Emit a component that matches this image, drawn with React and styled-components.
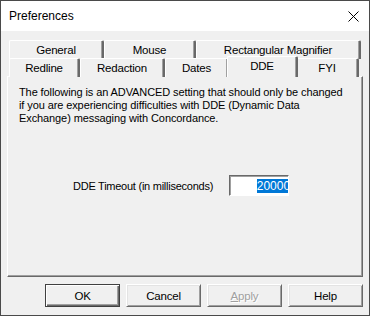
import React from 'react'
import styled, { createGlobalStyle } from 'styled-components'

const Global = createGlobalStyle`
  html, body { margin: 0; padding: 0; background: #f0f0f0; }
  * { box-sizing: border-box; }
`;

const Window = styled.div`
  width: 370px;
  height: 316px;
  border: 1px solid #4a4a4a;
  background: #f0f0f0;
  display: flex;
  flex-direction: column;
  font-family: "Liberation Sans", Arial, sans-serif;
  font-size: 11px;
  color: #000;
  overflow: hidden;
`;

const TitleBar = styled.div`
  height: 30px;
  background: #fff;
  display: flex;
  align-items: center;
  justify-content: space-between;
  padding: 0 10px 0 8px;
  font-size: 12px;
`;

const Body = styled.div`
  flex: 1;
  padding: 9px 6px 0 6px;
  display: flex;
  flex-direction: column;
`;

const Tabs = styled.div`
  display: flex;
  flex-direction: column;
  padding: 0 2px;
`;

const TabRow = styled.div`
  display: flex;
  height: 18px;
  position: relative;
  z-index: ${p => p.$front ? 2 : 1};
`;

const Tab = styled.div`
  width: ${p => p.$w}px;
  height: ${p => p.$active ? 21 : 19}px;
  margin-top: ${p => p.$active ? -2 : 0}px;
  margin-left: ${p => p.$active ? -2 : 0}px;
  margin-right: ${p => p.$active ? -2 : 0}px;
  position: relative;
  z-index: ${p => p.$active ? 3 : 1};
  background: #f0f0f0;
  border-top: 1px solid #fff;
  border-left: 1px solid #fff;
  border-right: 2px solid #696969;
  box-shadow: inset -1px 0 0 #a0a0a0;
  border-top-left-radius: 2px;
  border-top-right-radius: 2px;
  display: flex;
  align-items: center;
  justify-content: center;
  padding-bottom: ${p => p.$active ? 3 : 1}px;
  white-space: nowrap;
  font-size: 11.5px;
  letter-spacing: -0.2px;
`;

const Panel = styled.div`
  height: 201px;
  position: relative;
  z-index: 1;
  border-top: 1px solid #fff;
  border-left: 1px solid #fff;
  border-right: 1px solid #696969;
  border-bottom: 1px solid #696969;
  box-shadow: inset -1px -1px 0 #a0a0a0;
  padding: 9px 8px 0 11px;
  display: flex;
  flex-direction: column;
`;

const Notice = styled.p`
  margin: 0;
  max-width: 324px;
  line-height: 13px;
  font-size: 11px;
  letter-spacing: -0.1px;
`;

const Field = styled.div`
  display: flex;
  align-items: center;
  margin-top: 50px;
  padding-left: 54px;
  gap: 16px;
`;

const Label = styled.span`
  font-size: 11px;
  letter-spacing: -0.25px;
`;

const TextBox = styled.div`
  width: 60px;
  height: 21px;
  background: #fff;
  border-top: 1px solid #696969;
  border-left: 1px solid #696969;
  border-right: 1px solid #fff;
  border-bottom: 1px solid #fff;
  box-shadow: inset 1px 1px 0 #a0a0a0;
  display: flex;
  align-items: center;
  justify-content: flex-end;
  overflow: hidden;
`;

const Selection = styled.span`
  background: #0078d7;
  color: #fff;
  font-size: 12px;
  line-height: 14px;
  margin-right: -4px;
  padding-right: 1px;
  border-right: 1px solid #ff8c00;
`;

const Buttons = styled.div`
  display: flex;
  justify-content: flex-end;
  gap: 6px;
  margin-top: 7px;
`;

const Button = styled.button`
  width: 75px;
  height: 23px;
  padding: 0;
  background: #f0f0f0;
  font-family: "Liberation Sans", Arial, sans-serif;
  font-size: 11.5px;
  letter-spacing: -0.2px;
  color: ${p => p.disabled ? '#a0a0a0' : '#000'};
  border: 1px solid ${p => p.$default ? '#404040' : '#fff'};
  border-right-color: ${p => p.$default ? '#404040' : '#696969'};
  border-bottom-color: ${p => p.$default ? '#404040' : '#696969'};
  box-shadow: ${p => p.$default
    ? 'inset 1px 1px 0 #fff, inset -1px -1px 0 #696969, inset -2px -2px 0 #a0a0a0'
    : 'inset 1px 1px 0 #e3e3e3, inset -1px -1px 0 #a0a0a0'};
  text-shadow: ${p => p.disabled ? '1px 1px 0 #fff' : 'none'};
`;

const Close = () => (
  <svg width="11" height="11" viewBox="0 0 11 11">
    <path d="M0.5 0.5 L10.5 10.5 M10.5 0.5 L0.5 10.5" stroke="#000" strokeWidth="1" />
  </svg>
);

const App = () => (
  <>
    <Global />
    <Window>
      <TitleBar>
        <span>Preferences</span>
        <Close />
      </TitleBar>
      <Body>
        <Tabs>
          <TabRow>
            <Tab $w={95}>General</Tab>
            <Tab $w={92}>Mouse</Tab>
            <Tab $w={165}>Rectangular Magnifier</Tab>
          </TabRow>
          <TabRow $front>
            <Tab $w={71}>Redline</Tab>
            <Tab $w={85}>Redaction</Tab>
            <Tab $w={64}>Dates</Tab>
            <Tab $w={71} $active>DDE</Tab>
            <Tab $w={63}>FYI</Tab>
          </TabRow>
        </Tabs>
        <Panel>
          <Notice>
            The following is an ADVANCED setting that should only be changed
            if you are experiencing difficulties with DDE (Dynamic Data
            Exchange) messaging with Concordance.
          </Notice>
          <Field>
            <Label>DDE Timeout (in milliseconds)</Label>
            <TextBox>
              <Selection>20000</Selection>
            </TextBox>
          </Field>
        </Panel>
        <Buttons>
          <Button $default>OK</Button>
          <Button>Cancel</Button>
          <Button disabled><u>A</u>pply</Button>
          <Button>Help</Button>
        </Buttons>
      </Body>
    </Window>
  </>
);

export default App
